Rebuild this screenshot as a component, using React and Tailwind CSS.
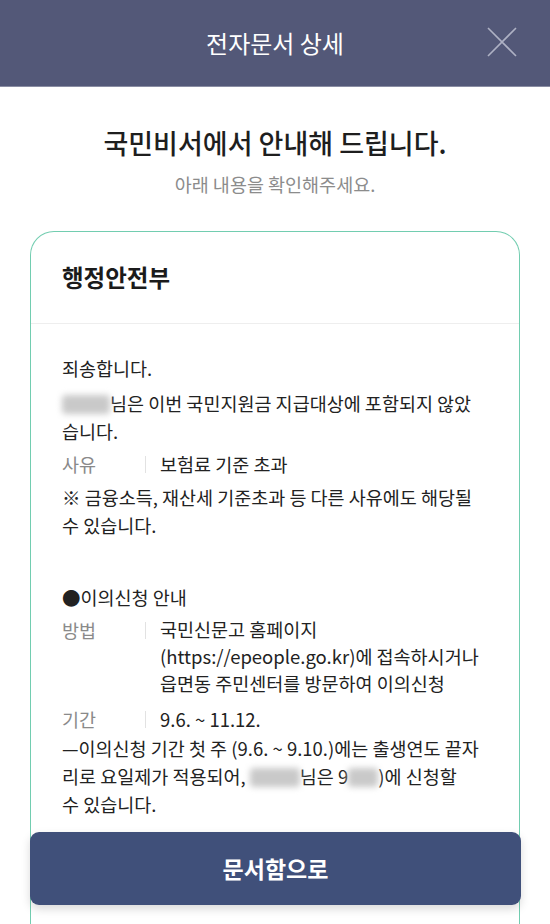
import React from 'react';

const font = { fontFamily: '"Noto Sans CJK KR", "Noto Sans", sans-serif' };

const Blur = ({ w }) => (
    <span className={`inline-block h-[19px] align-[-3px] rounded-sm bg-[#c9c9c9] blur-[3px] ${w}`} />
);

const Row = ({ label, children, className = 'mt-[5px]' }) => (
    <div className={`flex ${className}`}>
        <div className="w-[83px] shrink-0 text-[#8a8a8a]">{label}</div>
        <div className="mt-[6px] h-[17px] w-px shrink-0 bg-[#e2e2e2]" />
        <div className="pl-[14px]">{children}</div>
    </div>
);

const App = () => {
    return (
        <div className="relative h-[924px] w-[550px] overflow-hidden bg-white text-[#222]" style={font}>
            {/* header */}
            <div className="relative flex h-[87px] items-center justify-center border-b border-[#8a8da3] bg-[#535878]">
                <h1 className="text-[24px] text-white">전자문서 상세</h1>
                <button className="absolute right-[33px] top-[27px] h-[30px] w-[30px]">
                    <svg viewBox="0 0 30 30" className="h-full w-full" fill="none" stroke="#aeb1c4" strokeWidth="1.6">
                        <path d="M1 1 L29 29 M29 1 L1 29" />
                    </svg>
                </button>
            </div>

            <div className="pt-[37px] text-center">
                <h2 className="text-[27px] font-medium leading-[38px] text-[#1e1e1e]">국민비서에서 안내해 드립니다.</h2>
                <p className="mt-[8px] text-[18.5px] leading-[28px] text-[#8c8c8c]">아래 내용을 확인해주세요.</p>
            </div>

            {/* card */}
            <div className="mx-[30px] mt-[33px] rounded-t-[24px] border border-b-0 border-[#72cdb0] pb-[200px]">
                <div className="flex h-[92px] items-center border-b border-[#eeeeee] px-[31px]">
                    <h3 className="text-[23.5px] font-bold text-[#1b1b1b]">행정안전부</h3>
                </div>
                <div className="px-[31px] pt-[30px] text-[18.5px] leading-[28px]">
                    <p>죄송합니다.</p>
                    <p className="mt-[7px]">
                        <Blur w="w-[48px]" />님은 이번 국민지원금 지급대상에 포함되지 않았<br />습니다.
                    </p>
                    <Row label="사유">보험료 기준 초과</Row>
                    <p className="mt-[5px]">
                        ※ 금융소득, 재산세 기준초과 등 다른 사유에도 해당될<br />수 있습니다.
                    </p>

                    <p className="mt-[44px]">●이의신청 안내</p>
                    <Row label="방법">
                        <div className="leading-[27px]">
                            국민신문고 홈페이지<br />(https://epeople.go.kr)에 접속하시거나<br />읍면동 주민센터를 방문하여 이의신청
                        </div>
                    </Row>
                    <Row label="기간" className="mt-[8px]">9.6. ~ 11.12.</Row>
                    <p className="mt-[1px]">
                        —이의신청 기간 첫 주 (9.6. ~ 9.10.)에는 출생연도 끝자<br />리로 요일제가 적용되어, <Blur w="w-[50px]" />님은 9<Blur w="w-[30px]" />)에 신청할<br />수 있습니다.
                    </p>
                </div>
            </div>

            {/* bottom button */}
            <div className="absolute bottom-[19px] left-[30px] right-[29px]">
                <button className="flex h-[73px] w-full items-center justify-center rounded-[9px] bg-[#40507a] text-[23px] font-bold text-white shadow-[0_4px_10px_rgba(0,0,0,0.15)]">
                    문서함으로
                </button>
            </div>
        </div>
    );
};

export default App;
